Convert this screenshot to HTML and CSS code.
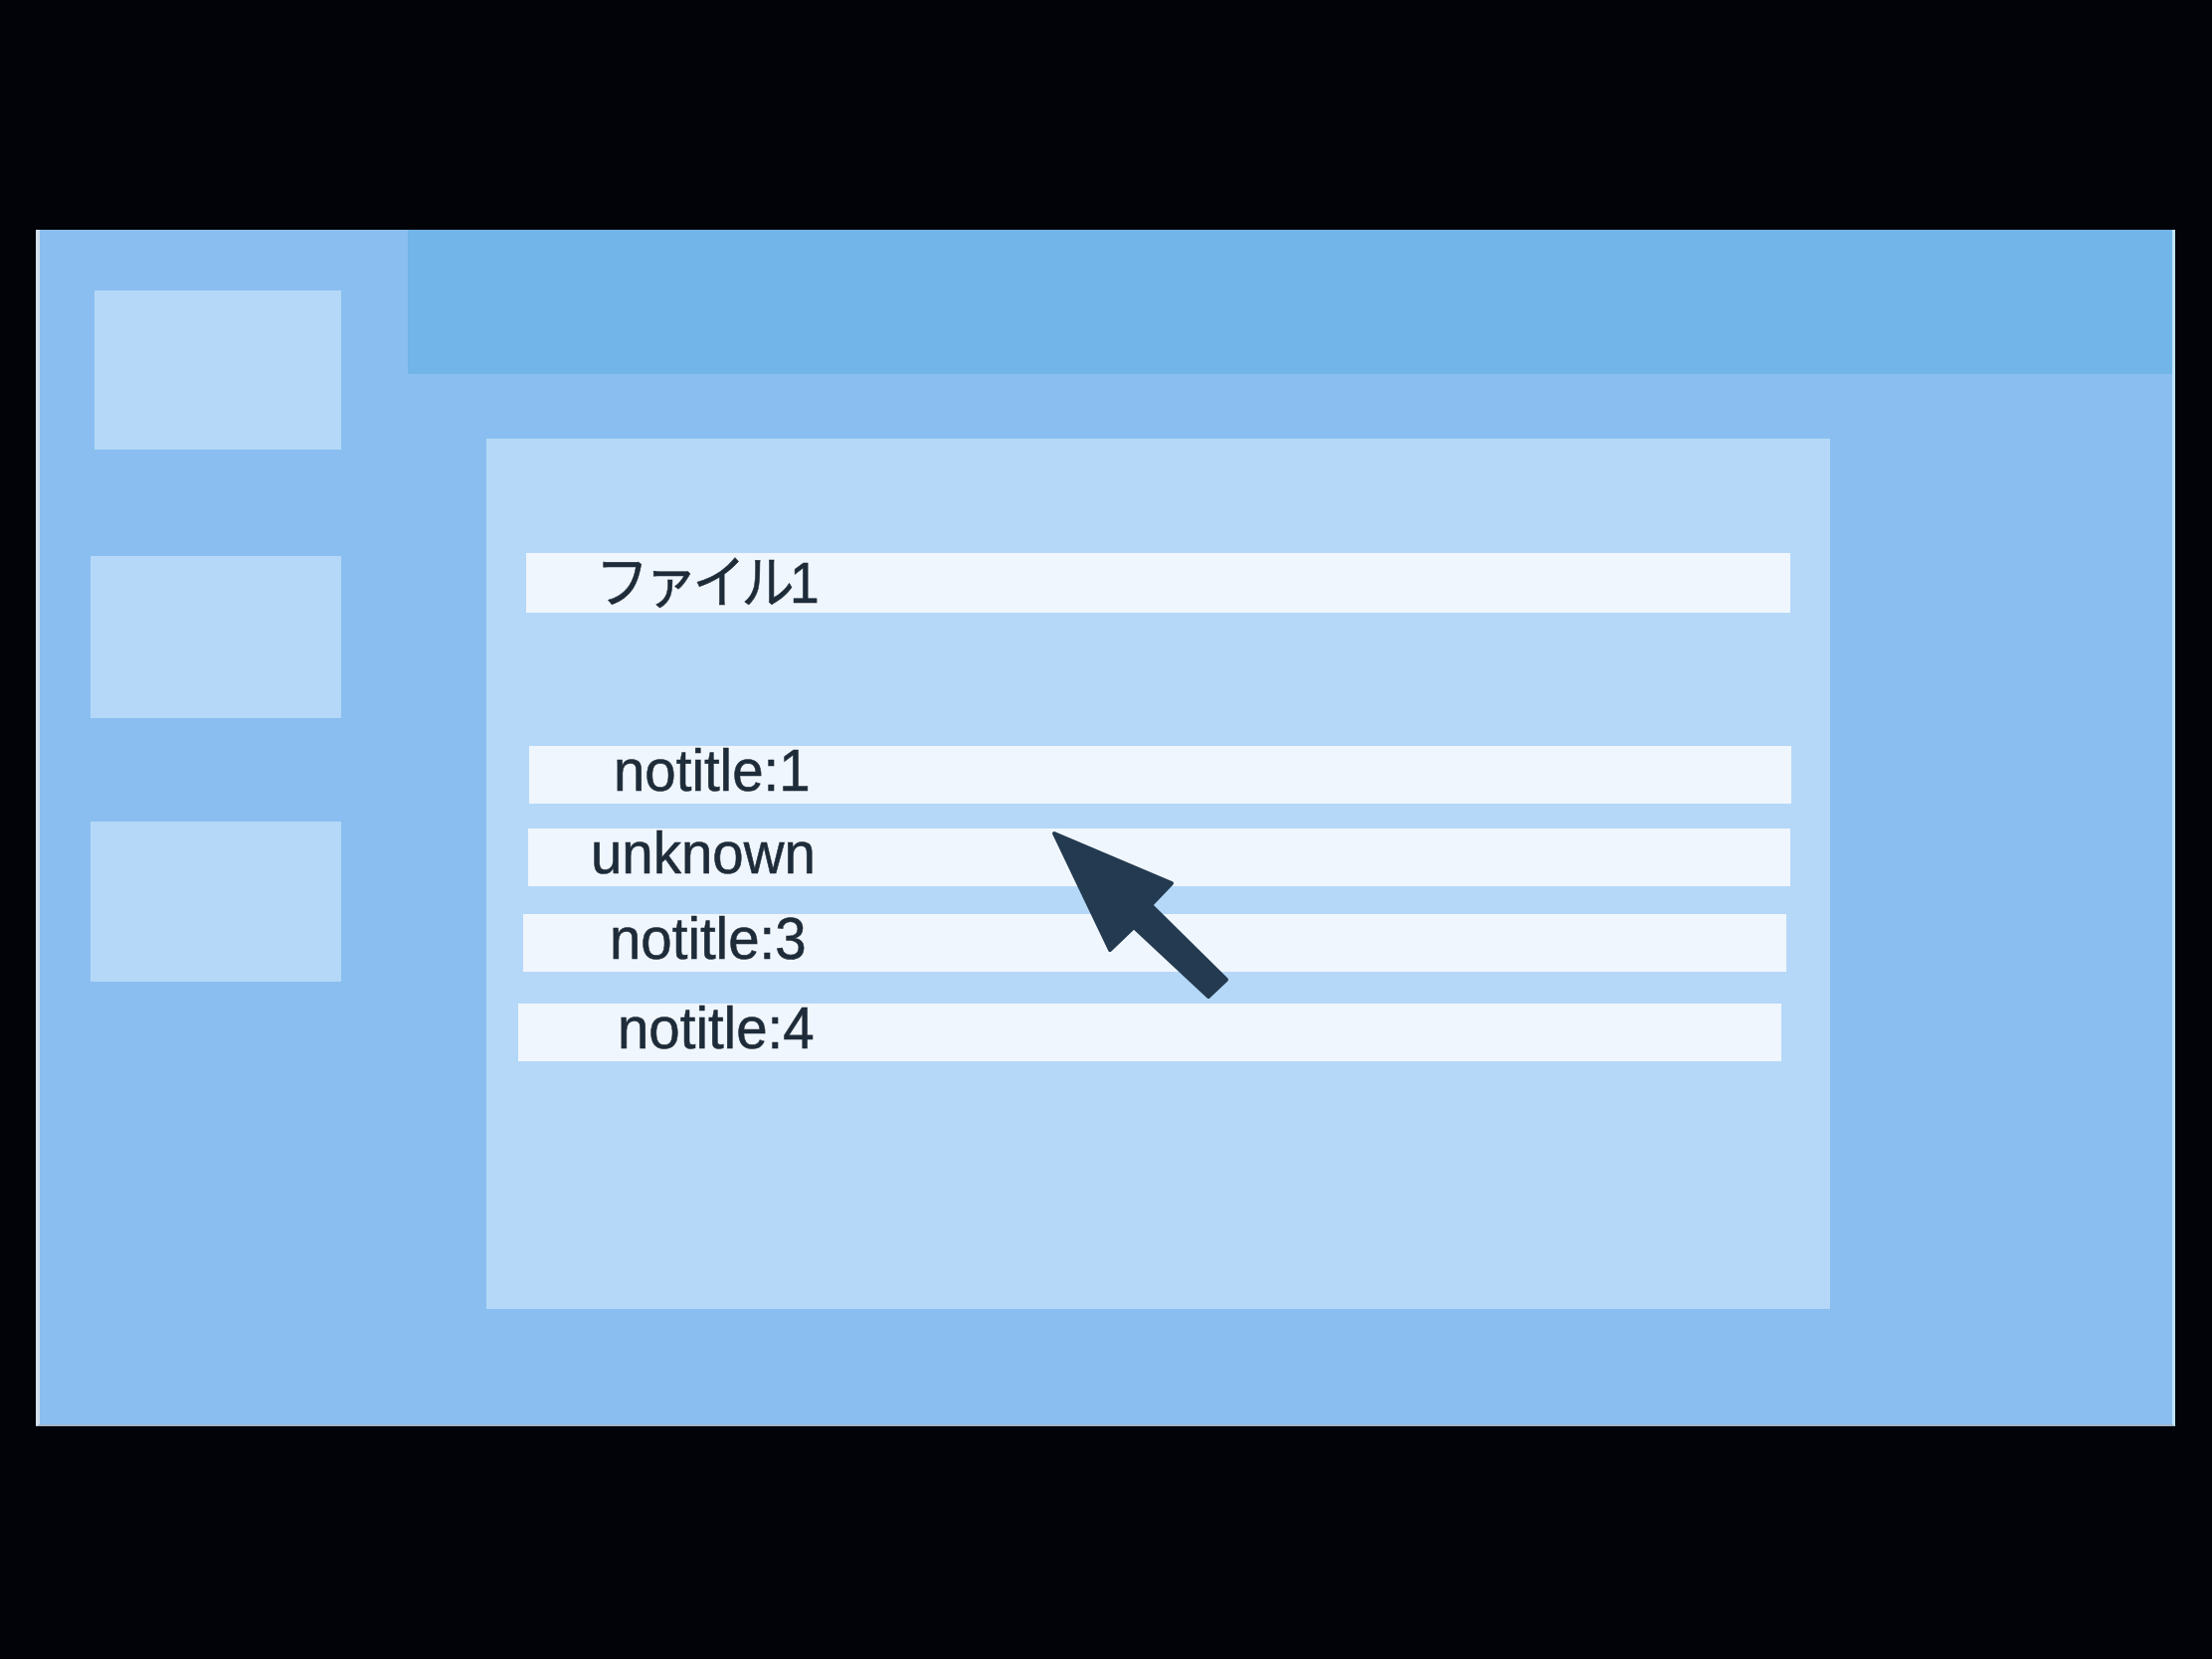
FILE: index.html
```html
<!DOCTYPE html>
<html lang="ja">
<head>
<meta charset="utf-8">
<title>ファイル一覧</title>
<link rel="stylesheet" href="styles.css">
</head>
<body>
  <div class="frame">
    <aside class="sidebar">
      <div class="side-box side-box-1"></div>
      <div class="side-box side-box-2"></div>
      <div class="side-box side-box-3"></div>
    </aside>
    <main class="content">
      <header class="topbar"></header>
      <section class="panel">
        <div class="row row-1"><span class="label label-ja">ファイル1</span></div>
        <div class="row row-2"><span class="label">notitle:1</span></div>
        <div class="row row-3"><span class="label">unknown</span></div>
        <div class="row row-4"><span class="label">notitle:3</span></div>
        <div class="row row-5"><span class="label">notitle:4</span></div>
        <svg class="cursor" width="200" height="190" viewBox="0 0 200 190" aria-hidden="true">
          <polygon points="10,10 128,60 107,82 183,157 165,174 90,104 66,127" fill="#233a50" stroke="#233a50" stroke-width="4" stroke-linejoin="round"/>
        </svg>
      </section>
    </main>
  </div>
</body>
</html>
```

FILE: styles.css
```css
* {
  box-sizing: border-box;
}

html, body {
  margin: 0;
  padding: 0;
}

body {
  width: 2224px;
  height: 1668px;
  background: #020308;
  padding: 231px 0 0 36px;
  font-family: "Liberation Sans", "Noto Sans CJK JP", sans-serif;
  overflow: hidden;
}

.frame {
  width: 2151px;
  height: 1203px;
  background: #8abef0;
  border-left: 4px solid #d3e0ec;
  border-right: 3px solid #bfe4f7;
  border-bottom: 2px solid #9fb6cc;
  display: grid;
  grid-template-columns: 370px 1fr;
}

.sidebar {
  display: flex;
  flex-direction: column;
  align-items: flex-end;
  padding: 61px 67px 0 0;
}

.side-box {
  background: #b5d8f8;
}

.side-box-1 {
  width: 248px;
  height: 160px;
  margin-bottom: 107px;
}

.side-box-2 {
  width: 252px;
  height: 163px;
  margin-bottom: 104px;
}

.side-box-3 {
  width: 252px;
  height: 161px;
}

.content {
  display: flex;
  flex-direction: column;
}

.topbar {
  height: 145px;
  background: #72b5e8;
}

.panel {
  position: relative;
  width: 1351px;
  height: 875px;
  margin: 65px 0 0 79px;
  background: #b5d8f8;
  display: flex;
  flex-direction: column;
  align-items: flex-start;
}

.row {
  display: flex;
  align-items: center;
  height: 58px;
  padding-bottom: 8px;
  background: #f0f6fd;
  color: #1e2b38;
}

.label {
  display: inline-block;
  font-size: 60px;
  line-height: 1;
  white-space: nowrap;
  -webkit-text-stroke: 0.6px #1e2b38;
  transform: scaleX(0.94);
  transform-origin: left center;
}

.label-ja {
  font-size: 58px;
  letter-spacing: -5px;
  transform: scaleX(0.92);
}

.row-1 {
  height: 60px;
  padding-bottom: 0;
  margin: 115px 0 0 40px;
  width: 1271px;
  padding-left: 70px;
}

.row-2 {
  margin: 134px 0 0 43px;
  width: 1269px;
  padding-left: 85px;
}

.row-3 {
  margin: 25px 0 0 42px;
  width: 1269px;
  padding-left: 63px;
}

.row-4 {
  margin: 28px 0 0 37px;
  width: 1270px;
  padding-left: 87px;
}

.row-5 {
  margin: 32px 0 0 32px;
  width: 1270px;
  padding-left: 100px;
}

.cursor {
  position: absolute;
  left: 561px;
  top: 387px;
}
```
